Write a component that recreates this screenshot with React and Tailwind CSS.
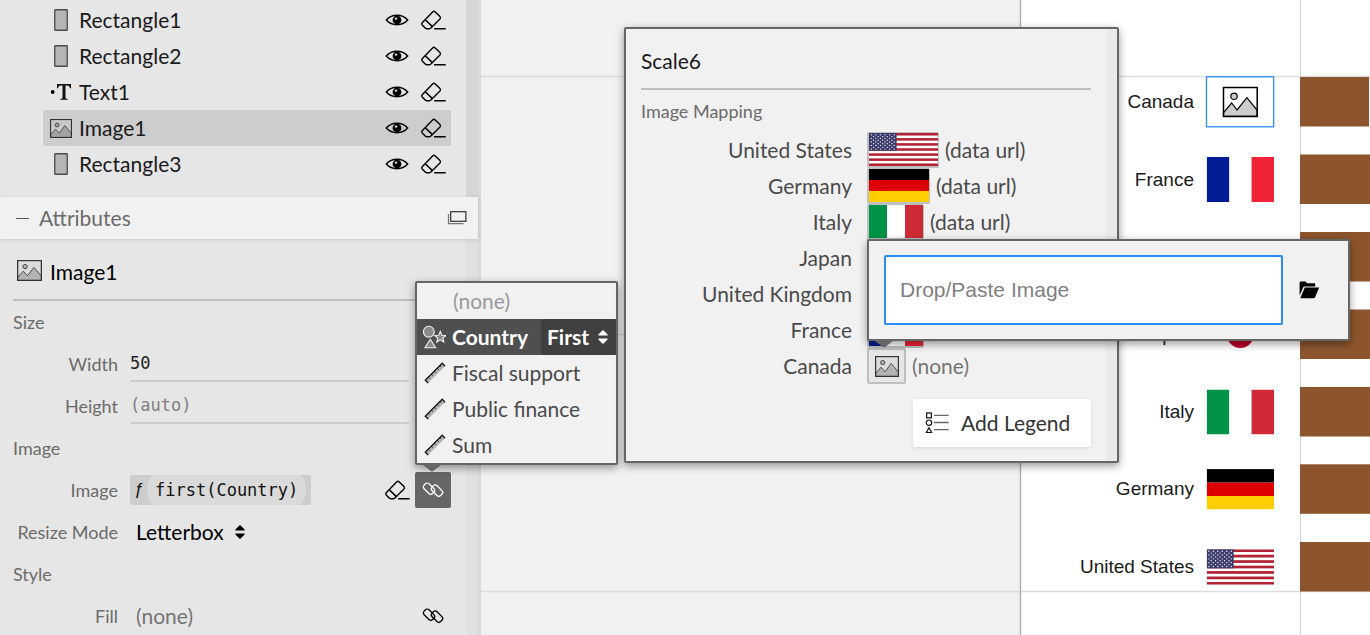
import React from "react";

/* ---------- icons ---------- */

function ImageIcon({ className, stroke = "#333", back = "#dcdcdc", fill = "#b3b3b3" }) {
  return (
    <svg viewBox="0 0 24 21" className={className} preserveAspectRatio="none" aria-hidden="true">
      <rect x="0.6" y="0.6" width="22.8" height="19.8" fill={back} />
      <path d="M0.7 17.4 6 11.2l4 4.6L16.2 7.4 23.4 16v4.4H0.7z" fill={fill} stroke={stroke} strokeWidth="0.8" />
      <circle cx="7.7" cy="6.6" r="2.1" fill={fill} stroke={stroke} strokeWidth="0.9" />
      <rect x="0.6" y="0.6" width="22.8" height="19.8" fill="none" stroke={stroke} strokeWidth="1.2" />
    </svg>
  );
}

function RectIcon() {
  return (
    <svg width="14" height="22" viewBox="0 0 14 22" aria-hidden="true">
      <rect x="0.75" y="0.75" width="12.5" height="20.5" rx="0.6" fill="#b5b5b5" stroke="#4a4a4a" strokeWidth="1.3" />
    </svg>
  );
}

function TextIcon() {
  return (
    <svg width="24" height="24" viewBox="0 0 24 24" aria-hidden="true">
      <circle cx="3.7" cy="12" r="1.9" fill="#000" />
      <path d="M8 4h14v4.2h-1.1c-.3-2-1-2.8-2.8-2.8H16.5v11.7c0 1.4.4 1.8 2.3 1.9v.8h-7.600v-.8c1.900-.1 2.300-.5 2.300-1.900V5.400h-1.600c-1.800 0-2.500.8-2.800 2.800H8z" fill="#111" />
    </svg>
  );
}

function EyeIcon() {
  return (
    <svg width="24" height="14" viewBox="0 0 24 14" aria-hidden="true">
      <path d="M1.3 7C4.500 3.500 8 2.300 12 2.300s7.500 1.200 10.700 4.700C19.500 10.500 16 11.700 12 11.700S4.500 10.500 1.300 7z" fill="none" stroke="#000" strokeWidth="1.4" />
      <circle cx="12" cy="7" r="4.4" fill="#000" />
      <circle cx="11" cy="5.600" r="1.200" fill="#e6e6e6" />
    </svg>
  );
}

function EraserIcon() {
  return (
    <svg width="26" height="24" viewBox="-1 0 26 24" fill="none" stroke="#000" strokeWidth="1.4" aria-hidden="true">
      <path d="M11.600 3.900Q12.900 2.700 14.200 3.900L19 8.600Q20 9.800 19 10.900L9.600 20.200Q9 20.700 8.200 20.700H5.600Q4.800 20.700 4.200 20.100L1.200 17.100Q0.300 15.900 1.200 14.800Z" />
      <path d="M4.500 12 11.700 18.900M13 20.700H24.700" strokeWidth="1.6" />
    </svg>
  );
}

function LinkIcon({ stroke = "#000" }) {
  return (
    <svg width="24" height="24" viewBox="0 0 24 24" fill="none" stroke={stroke} strokeWidth="1.3" aria-hidden="true">
      <rect x="2" y="7.200" width="12" height="7" rx="2.600" transform="rotate(45 8 10.700)" />
      <rect x="10" y="9.200" width="12" height="7" rx="2.600" transform="rotate(45 16 12.700)" />
    </svg>
  );
}

function WindowIcon() {
  return (
    <svg width="20" height="14" viewBox="0 0 20 14" fill="none" aria-hidden="true">
      <path d="M1.500 3v9.700H16.500" stroke="#777" strokeWidth="1.300" />
      <rect x="3.700" y="0.700" width="15.200" height="9.600" stroke="#333" strokeWidth="1.200" />
    </svg>
  );
}

function RulerIcon() {
  return (
    <svg width="22" height="22" viewBox="0 0 22 22" aria-hidden="true">
      <path d="M1.300 18.200 18.200 1.300 21 4.200 4.200 21z" fill="#b8b8b8" />
      <path d="M4.200 21 1.300 18.200 18.200 1.300 21 4.200" fill="none" stroke="#111" strokeWidth="1.300" />
      <path d="M4.300 15.200l1.500 1.500M7.300 12.200l1.500 1.500M10.300 9.200l1.500 1.500M13.300 6.200l1.500 1.500M16 3.500l1.500 1.500" stroke="#111" strokeWidth="0.900" />
    </svg>
  );
}

function CategoryIcon() {
  return (
    <svg width="24" height="24" viewBox="0 0 24 24" fill="#8a8a8a" stroke="#f1f1f1" strokeWidth="1.100" aria-hidden="true">
      <circle cx="6.800" cy="6.700" r="5.400" />
      <path d="M8.300 14.200 13.600 22.700H3z" />
      <path d="M18.300 6.500l1.600 3.700 4 .3-3 2.600.9 3.900-3.500-2.100-3.500 2.100.9-3.900-3-2.600 4-.3z" />
    </svg>
  );
}

function CaretIcon({ fill = "#000" }) {
  return (
    <svg width="10" height="14" viewBox="0 0 10 14" fill={fill} aria-hidden="true">
      <path d="M5 0 9.600 4.600V5.400H.4V4.600zM5 14 .4 9.400V8.600H9.600V9.400z" />
    </svg>
  );
}

function FolderIcon() {
  return (
    <svg width="21" height="18" viewBox="0 0 21 18" aria-hidden="true">
      <path d="M.6 1.300Q.7.500 1.500.500H6.200Q7 .500 7.300 1.200L7.800 2.300H15.200Q16.200 2.300 16.200 3.300V5.400H5.600Q4.700 5.400 4.300 6.200L.6 14.600z" />
      <path d="M5.800 6.600H20.200L16 16.500Q15.700 17.200 14.900 17.200H1.200z" />
    </svg>
  );
}

function LegendIcon() {
  return (
    <svg width="24" height="22" viewBox="0 0 24 22" fill="none" aria-hidden="true">
      <path d="M9 3.300H23.700M9 10.500H23.700M9 17.600H23.700" stroke="#666" strokeWidth="1.300" />
      <rect x="1.600" y="1" width="4.800" height="4.800" stroke="#111" strokeWidth="1.200" />
      <circle cx="4" cy="10.700" r="2.700" stroke="#111" strokeWidth="1.200" />
      <path d="M4 15.800 6.600 20.500H1.400z" stroke="#111" strokeWidth="1.200" />
    </svg>
  );
}

function PopupArrow({ className }) {
  return (
    <svg width="18" height="7" viewBox="0 0 18 7" className={className} aria-hidden="true">
      <path d="M0 0H18L9.500 6.500H8.500z" fill="#666" />
    </svg>
  );
}

/* ---------- flags ---------- */

const STRIPES = [0, 2, 4, 6, 8, 10, 12];
const STARS = [];
for (let r = 0; r < 9; r++) {
  const n = r % 2 === 0 ? 6 : 5;
  for (let c = 0; c < n; c++) STARS.push([6.300 * (r % 2 === 0 ? 1 : 2) + c * 12.600, 5.400 * (r + 1)]);
}

/* Every flag is drawn in a 100-unit-high box as wide as its own ratio. */
function FlagArt({ code }) {
  switch (code) {
    case "us":
      return (
        <>
          <rect width="190" height="100" fill="#fff" />
          {STRIPES.map((i) => (
            <rect key={i} y={(i * 100) / 13} width="190" height={100 / 13} fill="#b22234" />
          ))}
          <rect width="76" height="53.850" fill="#3c3b6e" />
          {STARS.map(([x, y]) => (
            <circle key={x + "-" + y} cx={x} cy={y} r="1.900" fill="#fff" />
          ))}
        </>
      );
    case "de":
      return (
        <>
          <rect width="166.700" height="33.400" fill="#000" />
          <rect y="33.300" width="166.700" height="33.400" fill="#d00" />
          <rect y="66.600" width="166.700" height="33.400" fill="#ffce00" />
        </>
      );
    case "it":
    case "fr":
      return (
        <>
          <rect width="150" height="100" fill="#fff" />
          <rect width="50" height="100" fill={code === "it" ? "#009246" : "#001c94"} />
          <rect x="100" width="50" height="100" fill={code === "it" ? "#ce2b37" : "#f02436"} />
        </>
      );
    case "jp":
      return (
        <>
          <rect width="150" height="100" fill="#fff" />
          <circle cx="75" cy="50" r="30" fill="#bc002d" />
        </>
      );
    default:
      return (
        <>
          <rect width="200" height="100" fill="#00247d" />
          <path d="M0 0 200 100M200 0 0 100" stroke="#fff" strokeWidth="20" />
          <path d="M0 0 200 100M200 0 0 100" stroke="#cf142b" strokeWidth="7" />
          <path d="M100 0V100M0 50H200" stroke="#fff" strokeWidth="33" />
          <path d="M100 0V100M0 50H200" stroke="#cf142b" strokeWidth="20" />
        </>
      );
  }
}

const FLAG_RATIO = { us: 190, de: 166.7, it: 150, fr: 150, jp: 150, gb: 200 };

function Flag({ code, ...rest }) {
  return (
    <svg viewBox={`0 0 ${FLAG_RATIO[code]} 100`} preserveAspectRatio="none" {...rest}>
      <FlagArt code={code} />
    </svg>
  );
}

/* ---------- left panel ---------- */

const LAYERS = [
  { name: "Rectangle1", icon: "rect" },
  { name: "Rectangle2", icon: "rect" },
  { name: "Text1", icon: "text" },
  { name: "Image1", icon: "image", selected: true },
  { name: "Rectangle3", icon: "rect" },
];

function LayerRow({ layer }) {
  return (
    <li className={`flex h-9 items-center rounded-xs pl-1.5 ${layer.selected ? "bg-[#cdcdcd]" : ""}`}>
      <span className="flex w-6 justify-center">
        {layer.icon === "rect" && <RectIcon />}
        {layer.icon === "text" && <TextIcon />}
        {layer.icon === "image" && <ImageIcon className="h-[19px] w-[22px]" back="#c8c8c8" fill="#a3a3a3" />}
      </span>
      <span className="ml-1.5 flex-1 text-[21px] text-[#1a1a1a]">{layer.name}</span>
      <button aria-label={`Show ${layer.name}`} className="flex size-9 items-center justify-center">
        <EyeIcon />
      </button>
      <button aria-label={`Remove ${layer.name}`} className="flex size-9 items-center justify-center">
        <EraserIcon />
      </button>
    </li>
  );
}

function Row({ label, htmlFor, children }) {
  return (
    <div className="flex h-[42px] items-center">
      <label htmlFor={htmlFor} className="mr-3 w-[105px] text-right text-[18px] text-[#6b6b6b]">
        {label}
      </label>
      {children}
    </div>
  );
}

function Section({ children }) {
  return <h3 className="flex h-[42px] items-center text-[18px] text-[#6b6b6b]">{children}</h3>;
}

function FieldMenu() {
  return (
    <div className="absolute bottom-[43px] left-0 z-20 w-[203px] rounded-xs border-2 border-[#666] bg-[#f1f1f1] text-[21px] text-[#4a4a4a] shadow-[0_3px_8px_rgba(0,0,0,0.4)]">
      <button className="flex h-9 w-full items-center pl-9 text-[#999]">(none)</button>
      <div className="flex h-9 items-center bg-[#4f4f4f] font-bold text-white">
        <button className="flex h-9 flex-1 items-center gap-1.5 pl-[5px]">
          <CategoryIcon />
          Country
        </button>
        <div className="grid h-9 w-[75px] items-center rounded-xs bg-[#404040] pr-2">
          <select
            aria-label="Aggregation"
            className="col-start-1 row-start-1 h-9 appearance-none bg-transparent pl-1.5 outline-none"
          >
            <option>First</option>
          </select>
          <span className="pointer-events-none col-start-1 row-start-1 justify-self-end">
            <CaretIcon fill="#fff" />
          </span>
        </div>
      </div>
      {["Fiscal support", "Public finance", "Sum"].map((t) => (
        <button key={t} className="flex h-9 w-full items-center gap-1.5 pl-[7px]">
          <RulerIcon />
          {t}
        </button>
      ))}
      <PopupArrow className="absolute top-full left-1.5 mt-0.5" />
    </div>
  );
}

function LeftPanel() {
  return (
    <aside className="relative z-10 flex w-[481px] shrink-0 flex-col border-r-[3px] border-[#d9d9d9] bg-[#e6e6e6]">
      <div className="flex shrink-0">
        <ul className="mr-[15px] ml-[43px] flex-1 pt-0.5 pb-[15px]">
          {LAYERS.map((l) => (
            <LayerRow key={l.name} layer={l} />
          ))}
        </ul>
        <div className="w-3 bg-[#d5d5d5]" />
      </div>

      <header className="relative flex h-[42px] shrink-0 items-center bg-[#f1f1f1] pr-[11px] pl-4 text-[21px] text-[#6b6b6b] shadow-[0_1px_4px_rgba(0,0,0,0.12)]">
        <span className="mr-[10px] h-px w-[13px] bg-[#555]" />
        <h2 className="flex-1">Attributes</h2>
        <button aria-label="Open in window">
          <WindowIcon />
        </button>
      </header>

      <div className="flex flex-1">
        <div className="mr-[15px] ml-[13px] flex-1">
          <div className="flex h-[62px] items-center border-b-2 border-[#bfbfbf] pt-1.5 pl-1">
            <ImageIcon className="mb-1 h-[21px] w-[25px]" />
            <span className="ml-2 text-[21px]">Image1</span>
          </div>

          <Section>Size</Section>
          <Row label="Width" htmlFor="width">
            <input
              id="width"
              defaultValue="50"
              className="mr-[42px] h-9 min-w-0 flex-1 border-b-2 border-[#ccc] bg-transparent font-['DejaVu_Sans_Mono',monospace] text-[17px] text-[#222] outline-none"
            />
          </Row>
          <Row label="Height" htmlFor="height">
            <input
              id="height"
              placeholder="(auto)"
              className="mr-[42px] h-9 min-w-0 flex-1 border-b-2 border-[#ccc] bg-transparent font-['DejaVu_Sans_Mono',monospace] text-[17px] outline-none placeholder:text-[#808080]"
            />
          </Row>

          <Section>Image</Section>
          <Row label="Image" htmlFor="expression">
            <button
              id="expression"
              className="flex h-[30px] items-center overflow-hidden rounded-xs bg-[#cdcdcd] pr-[5px] font-['DejaVu_Sans_Mono',monospace] text-[17px] text-[#111]"
            >
              <span className="w-[17px] text-center font-['Liberation_Sans',sans-serif] italic">ƒ</span>
              <span className="rounded-[8px/15px] bg-[#dadada] px-2 leading-[30px]">first(Country)</span>
            </button>
            <div className="flex-1" />
            <button aria-label="Clear image" className="flex size-9 items-center justify-center">
              <EraserIcon />
            </button>
            <div className="relative">
              <button aria-label="Bind image" className="flex size-9 items-center justify-center rounded-xs bg-[#666]">
                <LinkIcon stroke="#fff" />
              </button>
              <FieldMenu />
            </div>
          </Row>
          <Row label="Resize Mode" htmlFor="mode">
            <div className="grid w-[115px] items-center">
              <select
                id="mode"
                className="col-start-1 row-start-1 h-9 appearance-none bg-transparent pl-1.5 text-[21px] text-black outline-none"
              >
                <option>Letterbox</option>
              </select>
              <span className="pointer-events-none col-start-1 row-start-1 justify-self-end">
                <CaretIcon />
              </span>
            </div>
          </Row>

          <Section>Style</Section>
          <Row label="Fill" htmlFor="fill">
            <button id="fill" className="flex-1 pl-1.5 text-left text-[21px] text-[#757575]">
              (none)
            </button>
            <button aria-label="Bind fill" className="flex size-9 items-center justify-center">
              <LinkIcon />
            </button>
          </Row>
        </div>
        <div className="w-3 bg-[#e0e0e0]" />
      </div>
    </aside>
  );
}

/* ---------- chart canvas ---------- */

const BARS = [
  { name: "Canada", y: 77 },
  { name: "France", y: 154.5, code: "fr", h: 45 },
  { name: "United Kingdom", y: 232, code: "gb", h: 34 },
  { name: "Japan", y: 309.5, code: "jp", h: 45 },
  { name: "Italy", y: 387, code: "it", h: 45 },
  { name: "Germany", y: 464.3, code: "de", h: 40.4 },
  { name: "United States", y: 542, code: "us", h: 35.4 },
];

function Chart() {
  return (
    <svg width="889" height="635" viewBox="481 0 889 635" className="block" aria-label="Chart canvas">
      <rect x="1020" width="350" height="635" fill="#fff" />
      <path d="M481 76.500H1370M481 591.500H1370M481 334.500H1020" stroke="#dcdcdc" strokeWidth="1.500" />
      <path d="M1020.500 0V635" stroke="#adadad" strokeWidth="1.400" />
      <path d="M1300.500 0V635" stroke="#d2d2d2" strokeWidth="1" />
      {BARS.map((b) => (
        <g key={b.name}>
          <rect x="1300" y={b.y} width={b.code ? 80 : 69} height="49.500" fill="#8c552e" />
          <text
            x="1194"
            y={b.y + 31}
            textAnchor="end"
            fontSize="19"
            className="font-['Liberation_Sans',sans-serif]"
            fill="#1a1a1a"
          >
            {b.name}
          </text>
          {b.code && <Flag code={b.code} x="1206.700" y={b.y + 25 - b.h / 2} width="67.300" height={b.h} />}
        </g>
      ))}
      <rect x="1206.500" y="76.800" width="67.200" height="50" fill="#fff" stroke="#2a8cf5" strokeWidth="1.300" />
      <g transform="translate(1222.700 86.700)">
        <path d="M.8 26 9 16.300l5.300 7L24.200 11 34.500 23.600V29.700H.8z" fill="#ccc" stroke="#000" strokeWidth="1.200" />
        <circle cx="11.300" cy="9.600" r="3.200" fill="#ccc" stroke="#000" strokeWidth="1.200" />
        <rect x=".8" y=".8" width="33.700" height="29" fill="none" stroke="#000" strokeWidth="1.500" />
      </g>
    </svg>
  );
}

/* ---------- scale popup ---------- */

const MAPPING = [
  { name: "United States", code: "us", size: "w-[69px]" },
  { name: "Germany", code: "de", size: "w-[60px]" },
  { name: "Italy", code: "it", size: "w-[54px]" },
  { name: "Japan", code: "jp", size: "w-[54px]" },
  { name: "United Kingdom", code: "gb", size: "w-[72px]" },
  { name: "France", code: "fr", size: "w-[54px]" },
  { name: "Canada" },
];

function ImageDrop() {
  return (
    <div className="absolute bottom-[43px] left-0 z-30 flex w-[483px] items-center rounded-xs border-2 border-[#666] bg-[#f1f1f1] py-[14px] pr-[21px] pl-[15px] shadow-[0_3px_8px_rgba(0,0,0,0.4)]">
      <input
        aria-label="Image"
        placeholder="Drop/Paste Image"
        className="h-[70px] min-w-0 flex-1 rounded-xs border-2 border-[#2a8cf5] bg-white px-[14px] font-['Liberation_Sans',sans-serif] text-[21px] outline-none placeholder:text-[#808080]"
      />
      <button aria-label="Open file" className="ml-2 flex size-9 items-center justify-center">
        <FolderIcon />
      </button>
      <PopupArrow className="absolute top-full left-1.5 mt-0.5" />
    </div>
  );
}

function ScalePopup() {
  return (
    <div className="absolute top-[27px] left-[624px] z-20 flex w-[495px] rounded-xs border-2 border-[#666] bg-[#f1f1f1] text-[#4a4a4a] shadow-[0_3px_8px_rgba(0,0,0,0.4)]">
      <div className="mr-[15px] ml-[15px] flex-1 pb-[14px]">
        <h2 className="flex h-[61px] items-center border-b-2 border-[#bfbfbf] pt-1 text-[21px] text-[#1a1a1a]">Scale6</h2>
        <h3 className="flex h-[42px] items-center text-[18px] text-[#6b6b6b]">Image Mapping</h3>
        <ul className="text-[21px]">
          {MAPPING.map((m) => (
            <li key={m.name} className="flex h-9 items-center">
              <span className="mr-[15px] w-[211px] text-right">{m.name}</span>
              {m.code ? (
                <>
                  <button
                    aria-label={`${m.name} image`}
                    className="rounded-xs border border-b-2 border-l-2 border-[#bfbfbf]"
                  >
                    <Flag code={m.code} className={`block h-[33px] ${m.size}`} />
                  </button>
                  <span className="ml-1.5">(data url)</span>
                </>
              ) : (
                <div className="relative">
                  <div className="flex items-center">
                    <button
                      aria-label={`${m.name} image`}
                      className="flex h-9 w-[39px] items-center justify-center rounded-xs border-2 border-[#bfbfbf] bg-[#e6e6e6]"
                    >
                      <ImageIcon className="h-[21px] w-6" />
                    </button>
                    <span className="ml-1.5 text-[#757575]">(none)</span>
                  </div>
                  <ImageDrop />
                </div>
              )}
            </li>
          ))}
        </ul>
        <button className="mt-[15px] ml-auto flex h-12 w-[178px] items-center gap-3 rounded-xs bg-white pl-3 text-[21px] text-[#333] shadow-[0_1px_4px_rgba(0,0,0,0.1)]">
          <LegendIcon />
          Add Legend
        </button>
      </div>
      <div className="w-[11px] bg-[#eaeaea]" />
    </div>
  );
}

export default function App() {
  return (
    <div className="relative flex h-screen overflow-hidden bg-[#f1f1f1] font-['Lato',sans-serif] text-black">
      <LeftPanel />
      <main className="min-w-0 flex-1 overflow-hidden">
        <Chart />
      </main>
      <ScalePopup />
    </div>
  );
}
